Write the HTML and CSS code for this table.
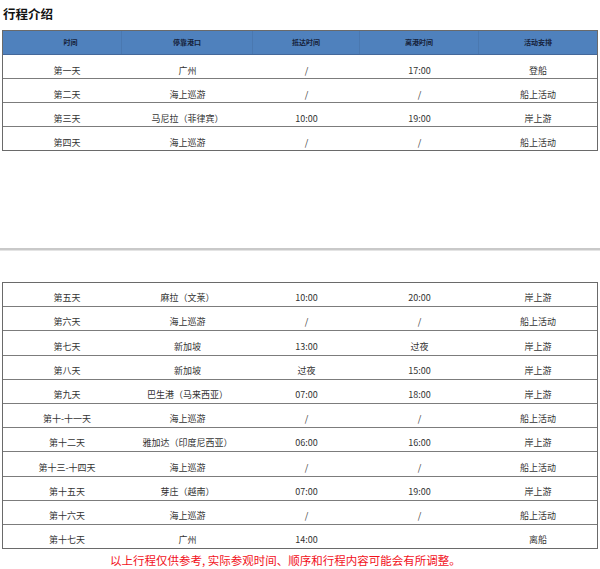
FILE: index.html
```html
<!DOCTYPE html>
<html lang="zh-CN">
<head>
<meta charset="utf-8">
<title>行程介绍</title>
<link rel="stylesheet" href="styles.css">
</head>
<body>
<h2 class="title">行程介绍</h2>
<div class="table table-top">
  <div class="row head">
    <div class="c c1">时间</div>
    <div class="c c2">停靠港口</div>
    <div class="c c3">抵达时间</div>
    <div class="c c4">离港时间</div>
    <div class="c c5">活动安排</div>
  </div>
  <div class="row"><div class="c c1">第一天</div><div class="c c2">广州</div><div class="c c3">/</div><div class="c c4">17:00</div><div class="c c5">登船</div></div>
  <div class="row"><div class="c c1">第二天</div><div class="c c2">海上巡游</div><div class="c c3">/</div><div class="c c4">/</div><div class="c c5">船上活动</div></div>
  <div class="row"><div class="c c1">第三天</div><div class="c c2">马尼拉（菲律宾）</div><div class="c c3">10:00</div><div class="c c4">19:00</div><div class="c c5">岸上游</div></div>
  <div class="row last"><div class="c c1">第四天</div><div class="c c2">海上巡游</div><div class="c c3">/</div><div class="c c4">/</div><div class="c c5">船上活动</div></div>
</div>
<div class="sep"></div>
<div class="table table-bottom">
  <div class="row"><div class="c c1">第五天</div><div class="c c2">麻拉（文莱）</div><div class="c c3">10:00</div><div class="c c4">20:00</div><div class="c c5">岸上游</div></div>
  <div class="row"><div class="c c1">第六天</div><div class="c c2">海上巡游</div><div class="c c3">/</div><div class="c c4">/</div><div class="c c5">船上活动</div></div>
  <div class="row"><div class="c c1">第七天</div><div class="c c2">新加坡</div><div class="c c3">13:00</div><div class="c c4">过夜</div><div class="c c5">岸上游</div></div>
  <div class="row"><div class="c c1">第八天</div><div class="c c2">新加坡</div><div class="c c3">过夜</div><div class="c c4">15:00</div><div class="c c5">岸上游</div></div>
  <div class="row"><div class="c c1">第九天</div><div class="c c2">巴生港（马来西亚）</div><div class="c c3">07:00</div><div class="c c4">18:00</div><div class="c c5">岸上游</div></div>
  <div class="row"><div class="c c1">第十-十一天</div><div class="c c2">海上巡游</div><div class="c c3">/</div><div class="c c4">/</div><div class="c c5">船上活动</div></div>
  <div class="row"><div class="c c1">第十二天</div><div class="c c2">雅加达（印度尼西亚）</div><div class="c c3">06:00</div><div class="c c4">16:00</div><div class="c c5">岸上游</div></div>
  <div class="row"><div class="c c1">第十三-十四天</div><div class="c c2">海上巡游</div><div class="c c3">/</div><div class="c c4">/</div><div class="c c5">船上活动</div></div>
  <div class="row"><div class="c c1">第十五天</div><div class="c c2">芽庄（越南）</div><div class="c c3">07:00</div><div class="c c4">19:00</div><div class="c c5">岸上游</div></div>
  <div class="row"><div class="c c1">第十六天</div><div class="c c2">海上巡游</div><div class="c c3">/</div><div class="c c4">/</div><div class="c c5">船上活动</div></div>
  <div class="row last"><div class="c c1">第十七天</div><div class="c c2">广州</div><div class="c c3">14:00</div><div class="c c4"></div><div class="c c5">离船</div></div>
</div>
<p class="note">以上行程仅供参考, 实际参观时间、顺序和行程内容可能会有所调整。</p>
</body>
</html>
```
FILE: styles.css
```css
html, body {
  margin: 0;
  padding: 0;
  background: #ffffff;
}
body {
  width: 600px;
  font-family: "Noto Sans CJK SC", "Noto Sans", sans-serif;
  color: #333333;
}
.title {
  margin: 0;
  height: 30px;
  padding: 6px 0 0 3px;
  box-sizing: border-box;
  font-size: 12.5px;
  line-height: 16px;
  font-weight: 700;
  color: #111111;
}
.table {
  margin-left: 2px;
  width: 596px;
  box-sizing: border-box;
  border: 1px solid #6a6a6a;
  border-bottom: none;
}
.row {
  display: grid;
  grid-template-columns: 119px 131px 107px 119px 118px;
  height: 24px;
  box-sizing: border-box;
  border-bottom: 1px solid #7c7c7c;
  align-items: end;
}
.row.last {
  border-bottom: 1px solid #6a6a6a;
}
.c {
  text-align: center;
  font-size: 9px;
  line-height: 12px;
  padding-bottom: 1px;
  white-space: nowrap;
}
.c1 {
  padding-left: 9px;
}
.head {
  background: #4f81bd;
  align-items: center;
  border-bottom: 1px solid #44689a;
}
.head .c {
  font-size: 7px;
  font-weight: 700;
  color: #16223a;
  padding-bottom: 0;
  height: 23px;
  line-height: 23px;
  border-right: 1px solid #4a78b0;
}
.head .c5 {
  border-right: none;
}
.head .c1 {
  padding-left: 17px;
}
.table-bottom .row {
  height: 24.2px;
}
.table-bottom .c {
  padding-bottom: 2px;
}
.sep {
  margin-top: 97px;
  height: 2px;
  background: #c9c9c9;
  border-bottom: 1px solid #e4e4e4;
}
.table-bottom {
  margin-top: 31px;
}
.note {
  margin: 3px 0 0 0;
  padding-left: 110px;
  font-size: 11.5px;
  line-height: 16px;
  color: #f2121c;
  white-space: nowrap;
}
```
